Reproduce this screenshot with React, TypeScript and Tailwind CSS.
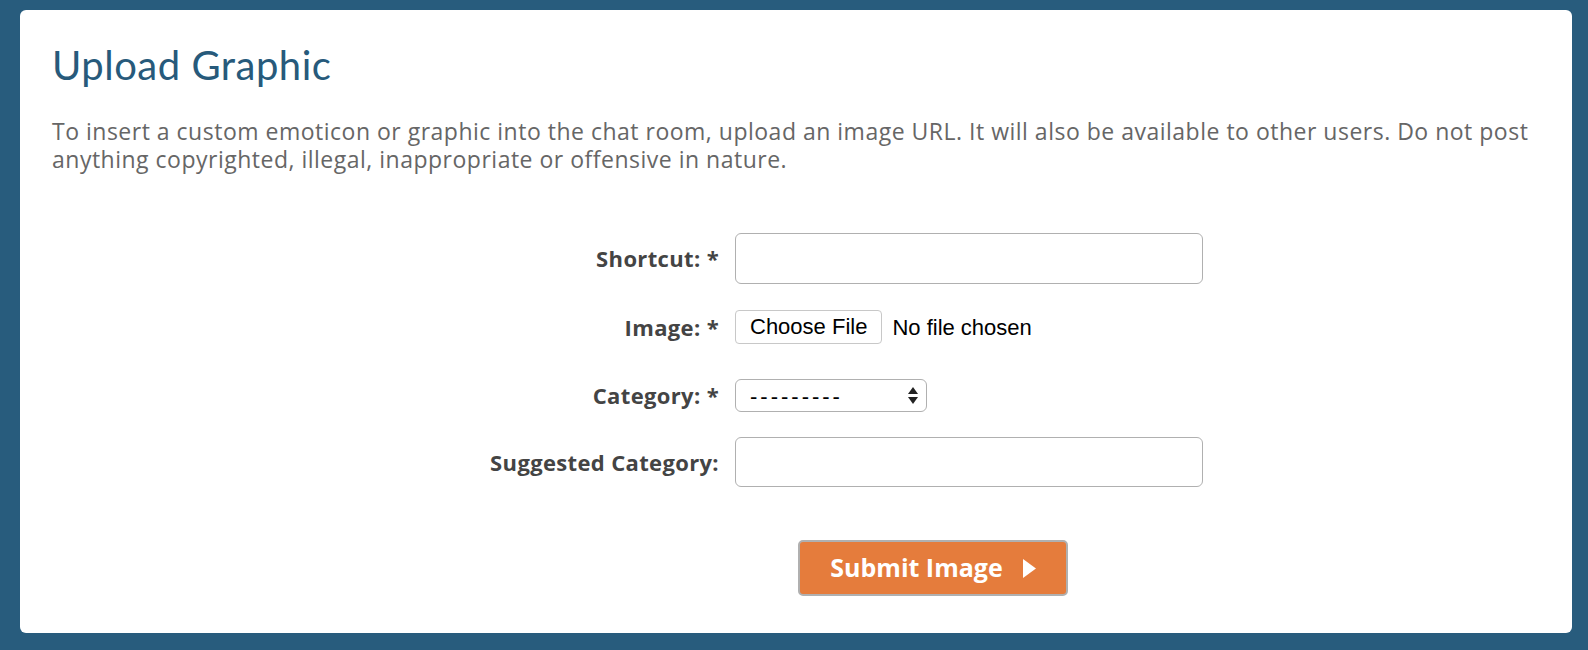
import React from 'react';

const sans = { fontFamily: '"Open Sans", "Noto Sans", sans-serif' };
const sys = { fontFamily: '"Liberation Sans", Arial, sans-serif' };

const FormRow: React.FC<{ label: string; children: React.ReactNode; className?: string }> = ({ label, children, className }) => (
  <div className={`grid grid-cols-[667px_468px] gap-x-[16px] items-center ${className ?? ''}`}>
    <label className="text-right text-[22px] font-bold text-[#444] tracking-[0.35px]">{label}</label>
    <div className="flex items-center">{children}</div>
  </div>
);

export default function App() {
  return (
    <div className="h-[650px] bg-[#285c7d] pl-[20px] pr-[16px] pt-[10px] pb-[17px] flex" style={sans}>
      <div className="flex-1 bg-white rounded-[6px] px-[32px] pt-[31px]">
        <h1
          className="text-[40px] leading-[48px] text-[#275a7b] tracking-[0.5px]"
          style={{ fontFamily: 'Lato, "Open Sans", sans-serif' }}
        >
          Upload Graphic
        </h1>

        <p className="mt-[28px] text-[23px] leading-[28px] text-[#666] tracking-[0.5px]">
          To insert a custom emoticon or graphic into the chat room, upload an image URL. It will also be available to
          other users. Do not post anything copyrighted, illegal, inappropriate or offensive in nature.
        </p>

        <form className="mt-[60px]" onSubmit={(e) => e.preventDefault()}>
          <FormRow label="Shortcut: *">
            <input type="text" className="w-full h-[51px] rounded-[6px] border-[1.5px] border-[#b0b0b0] px-3 outline-none" />
          </FormRow>

          <FormRow label="Image: *" className="mt-[26px]">
            <div className="flex items-center h-[34px]" style={sys}>
              <button type="button" className="h-[34px] px-[14px] rounded-[4px] border border-[#c8c8c8] bg-white text-[22px] leading-none text-black">
                Choose File
              </button>
              <span className="ml-[10px] text-[22px] text-black">No file chosen</span>
            </div>
          </FormRow>

          <FormRow label="Category: *" className="mt-[35px]">
            <div className="relative w-[192px] h-[33px]">
              <select
                className="appearance-none w-full h-full rounded-[6px] border-[1.5px] border-[#b0b0b0] bg-white pl-[14px] text-[22px] tracking-[3px] text-black outline-none"
                style={sys}
                defaultValue=""
              >
                <option value="">---------</option>
              </select>
              <svg className="absolute right-[9px] top-[8px] pointer-events-none" width="10" height="17" viewBox="0 0 10 17">
                <path d="M5 0 L10 7 L0 7 Z" fill="#222" />
                <path d="M0 10 L10 10 L5 17 Z" fill="#222" />
              </svg>
            </div>
          </FormRow>

          <FormRow label="Suggested Category:" className="mt-[25px]">
            <input type="text" className="w-full h-[50px] rounded-[6px] border-[1.5px] border-[#b0b0b0] px-3 outline-none" />
          </FormRow>

          <div className="mt-[53px] pl-[746px]">
            <button
              type="submit"
              className="w-[270px] h-[56px] rounded-[5px] border-2 border-[#b0b0b0] bg-[#e57c3c] text-white text-[25px] font-bold flex items-center justify-center gap-[20px]"
            >
              Submit Image
              <svg width="13" height="19" viewBox="0 0 13 19">
                <path d="M0 0 L13 9.5 L0 19 Z" fill="#fff" />
              </svg>
            </button>
          </div>
        </form>
      </div>
    </div>
  );
}
